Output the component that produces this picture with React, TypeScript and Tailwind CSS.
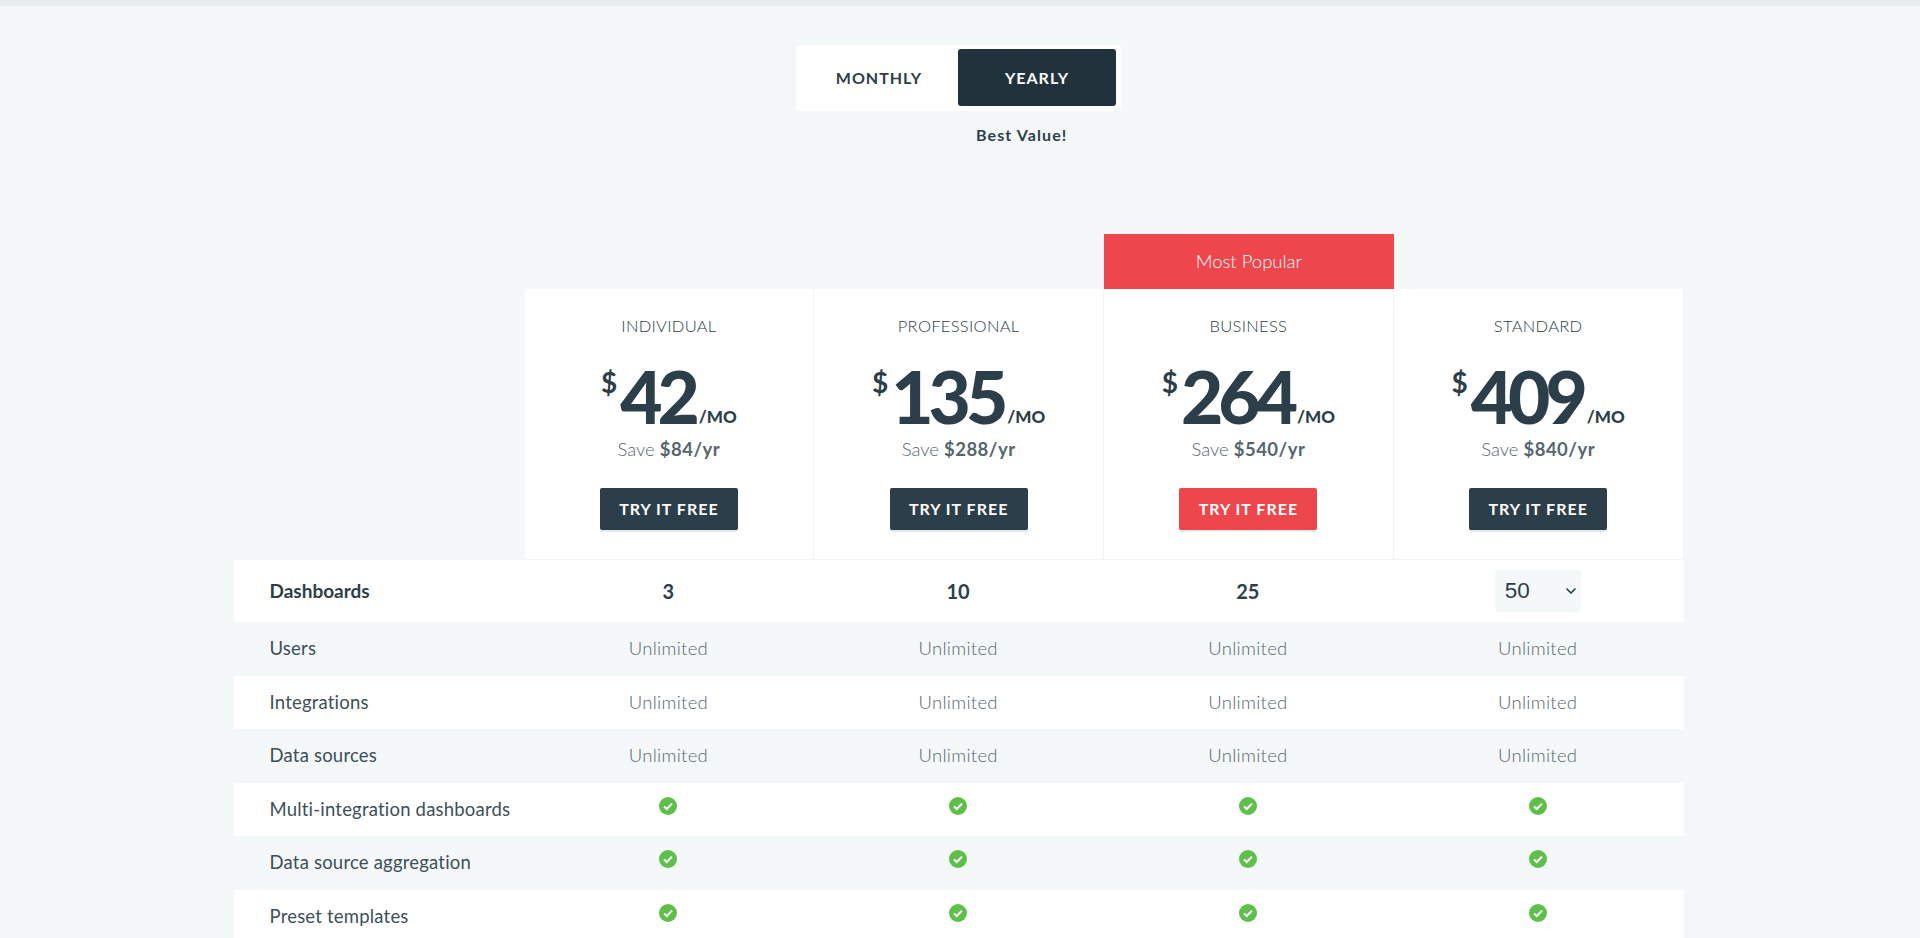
import { ChevronDown } from "lucide-react";

const plans = [
  { name: "INDIVIDUAL", price: "42", save: "$84/yr", count: "3" },
  { name: "PROFESSIONAL", price: "135", save: "$288/yr", count: "10" },
  { name: "BUSINESS", price: "264", save: "$540/yr", count: "25", popular: true },
  { name: "STANDARD", price: "409", save: "$840/yr", count: "50", select: true },
];

const unlimitedRows = ["Users", "Integrations", "Data sources"];
const checkRows = ["Multi-integration dashboards", "Data source aggregation", "Preset templates"];

function Check() {
  return (
    <svg width="18" height="18" viewBox="0 0 18 18" className="mb-[8px]">
      <circle cx="9" cy="9" r="9" fill="#5fbf4b" />
      <path d="M5 9.4l2.8 2.6L13 6.6" fill="none" stroke="#fff" strokeWidth="2" />
    </svg>
  );
}

function Row({ label, shaded, children }: { label: string; shaded: boolean; children: React.ReactNode[] }) {
  return (
    <div className={`flex h-[53.6px] items-center ${shaded ? "bg-[#f4f8f9]" : "bg-white"}`}>
      <div className="w-[291px] pl-[36px] text-[18.5px] tracking-[0.2px] text-[#3d4f59]">{label}</div>
      {children.map((c, i) => (
        <div key={i} className="flex w-[289.75px] items-center justify-center pr-[2px]">
          {c}
        </div>
      ))}
    </div>
  );
}

export default function App() {
  return (
    <div className="h-screen overflow-hidden bg-[#f4f8f9] pr-[3px] font-['Lato',sans-serif] text-[#2c3e4a]">
      <div className="-mr-[3px] h-[6px] bg-[#e6edee]" />

      <div className="mx-auto mt-[39px] flex w-[325px] rounded bg-white px-[4px] pt-[4px] pb-[5px] text-[16px] font-bold tracking-[1px]">
        <button className="h-[57px] w-[158px] text-[#2c3e4a]">MONTHLY</button>
        <button className="h-[57px] w-[158px] rounded-[3px] bg-[#22323c] text-white">YEARLY</button>
      </div>
      <p className="mt-[14px] ml-[976px] text-[16px] leading-5 font-bold tracking-[1.1px] text-[#2c3e4a]">Best Value!</p>

      <div className="mx-auto mt-[89px] w-[1450px]">
        <div className="ml-[291px] flex">
          {plans.map((p) => (
            <div key={p.name} className="w-[289.75px]">
              {p.popular ? (
                <div className="flex h-[55px] items-center justify-center bg-[#ed464c] text-[18.5px] font-light text-white">
                  Most Popular
                </div>
              ) : (
                <div className="h-[55px]" />
              )}
              <div className="flex h-[271px] flex-col items-center border-r border-b border-[#f1f5f6] bg-white pt-[26px]">
                <h3 className="text-[16.5px] leading-[22px] font-light tracking-[0.3px] text-[#2c3e4a]">{p.name}</h3>
                <div className="mt-[28px] flex h-[62px] items-end">
                  <span className="mr-[3px] mb-[31px] text-[28px] leading-none font-bold">$</span>
                  <span className="text-[73px] leading-[62px] font-black tracking-[-5px]">{p.price}</span>
                  <span className="ml-[4px] text-[17px] leading-[20px] font-black">/MO</span>
                </div>
                <p className="mt-[10px] text-[18.5px] leading-6 font-light text-[#56666f]">
                  Save <b className="font-bold tracking-[0.5px]">{p.save}</b>
                </p>
                <button
                  className={`mt-[27px] h-[42px] w-[138px] rounded-[2px] text-[16px] font-bold tracking-[1px] text-white shadow-[0_2px_0_#e3eaec] ${
                    p.popular ? "bg-[#ed464c]" : "bg-[#2c3e4a]"
                  }`}
                >
                  TRY IT FREE
                </button>
              </div>
            </div>
          ))}
        </div>

        <div className="flex h-[62px] items-center bg-white">
          <div className="w-[291px] pl-[36px] text-[19px] font-bold text-[#2c3e4a]">Dashboards</div>
          {plans.map((p) => (
            <div key={p.name} className="flex w-[289.75px] items-center justify-center pr-[2px] text-[20px] font-bold">
              {p.select ? (
                <div className="flex h-[42px] w-[86px] items-center justify-between rounded bg-[#f4f8f9] pr-[2px] pl-[10px]">
                  <span className="font-['Liberation_Sans',sans-serif] text-[22.5px] font-normal">50</span>
                  <ChevronDown size={16} strokeWidth={2.5} />
                </div>
              ) : (
                p.count
              )}
            </div>
          ))}
        </div>

        {unlimitedRows.map((label, i) => (
          <Row key={label} label={label} shaded={i % 2 === 0}>
            {plans.map((p) => (
              <span key={p.name} className="text-[18.5px] font-light tracking-[0.3px] text-[#56666f]">
                Unlimited
              </span>
            ))}
          </Row>
        ))}
        {checkRows.map((label, i) => (
          <Row key={label} label={label} shaded={i % 2 === 1}>
            {plans.map((p) => (
              <Check key={p.name} />
            ))}
          </Row>
        ))}
      </div>
    </div>
  );
}
